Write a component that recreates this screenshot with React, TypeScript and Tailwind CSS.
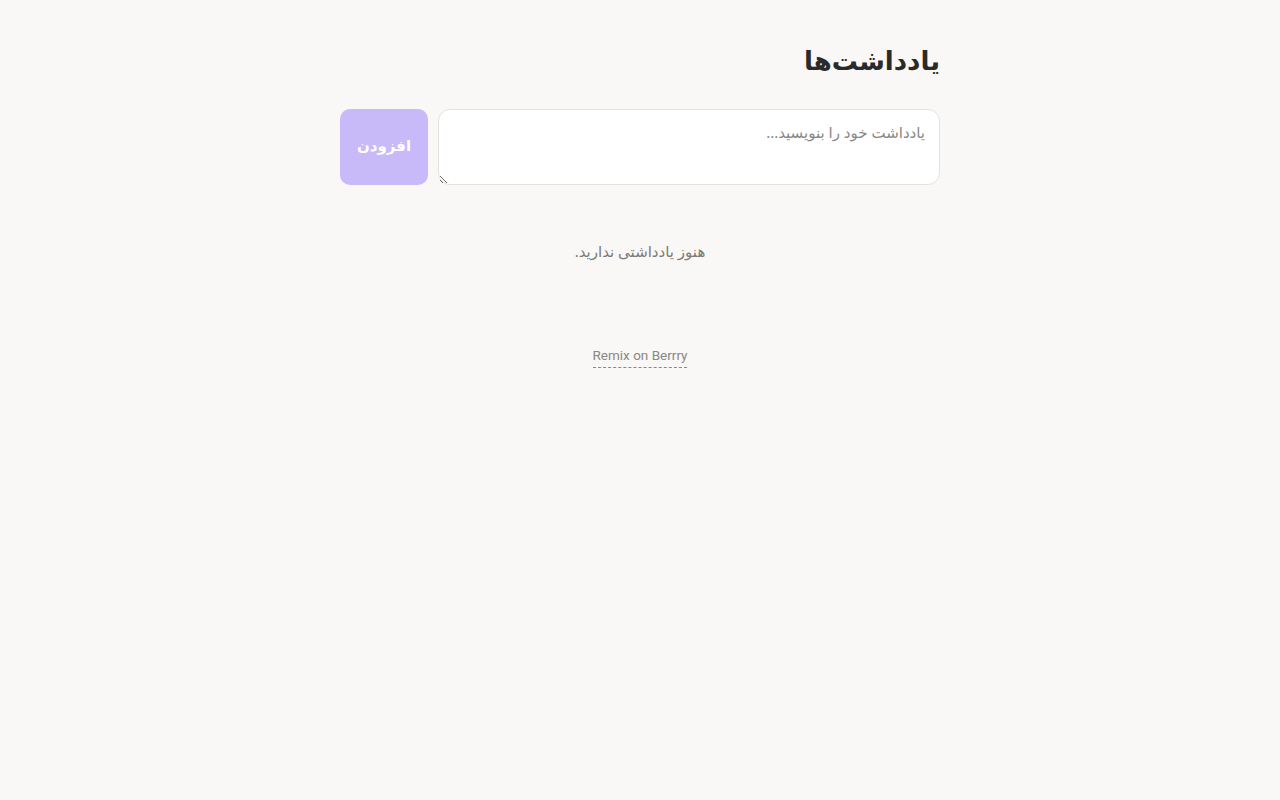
import { useState } from 'react';

const App = () => {
  const [text, setText] = useState('');

  return (
    <div
      dir="rtl"
      className="min-h-screen bg-[#f9f8f6] text-[#222]"
      style={{ fontFamily: '"Noto Sans", "DejaVu Sans", sans-serif' }}
    >
      <div className="mx-auto w-[600px] pt-10">
        {/* Header */}
        <h1 className="mb-[29px] text-[26px] font-bold leading-10 text-[#2a2a2a]">یادداشت‌ها</h1>

        {/* Composer */}
        <div className="flex gap-[10px]">
          <textarea
            value={text}
            onChange={(e) => setText(e.target.value)}
            placeholder="یادداشت خود را بنویسید..."
            className="h-[76px] flex-1 rounded-xl border border-[#e4e2df] bg-white px-[14px] pt-[10px] pb-[11px] text-[15px] leading-6 outline-none placeholder:text-[#8a8784]"
          />
          <button
            disabled={!text.trim()}
            className="w-[88px] rounded-[10px] bg-[#c8b9f9] pb-[4px] text-[15px] font-bold text-white"
          >
            افزودن
          </button>
        </div>

        {/* Empty state */}
        <p className="mt-[54px] text-center text-[15px] leading-6 text-[#7d7a77]">هنوز یادداشتی ندارید.</p>

        {/* Footer */}
        <div className="mt-[79px] text-center" dir="ltr">
          <a
            href="#"
            className="border-b border-dashed border-[#8a8784] pb-[4px] text-[13.5px] leading-5 text-[#8a8784]"
            style={{ fontFamily: 'Roboto, sans-serif' }}
          >
            Remix on Berrry
          </a>
        </div>
      </div>
    </div>
  );
};

export default App;
